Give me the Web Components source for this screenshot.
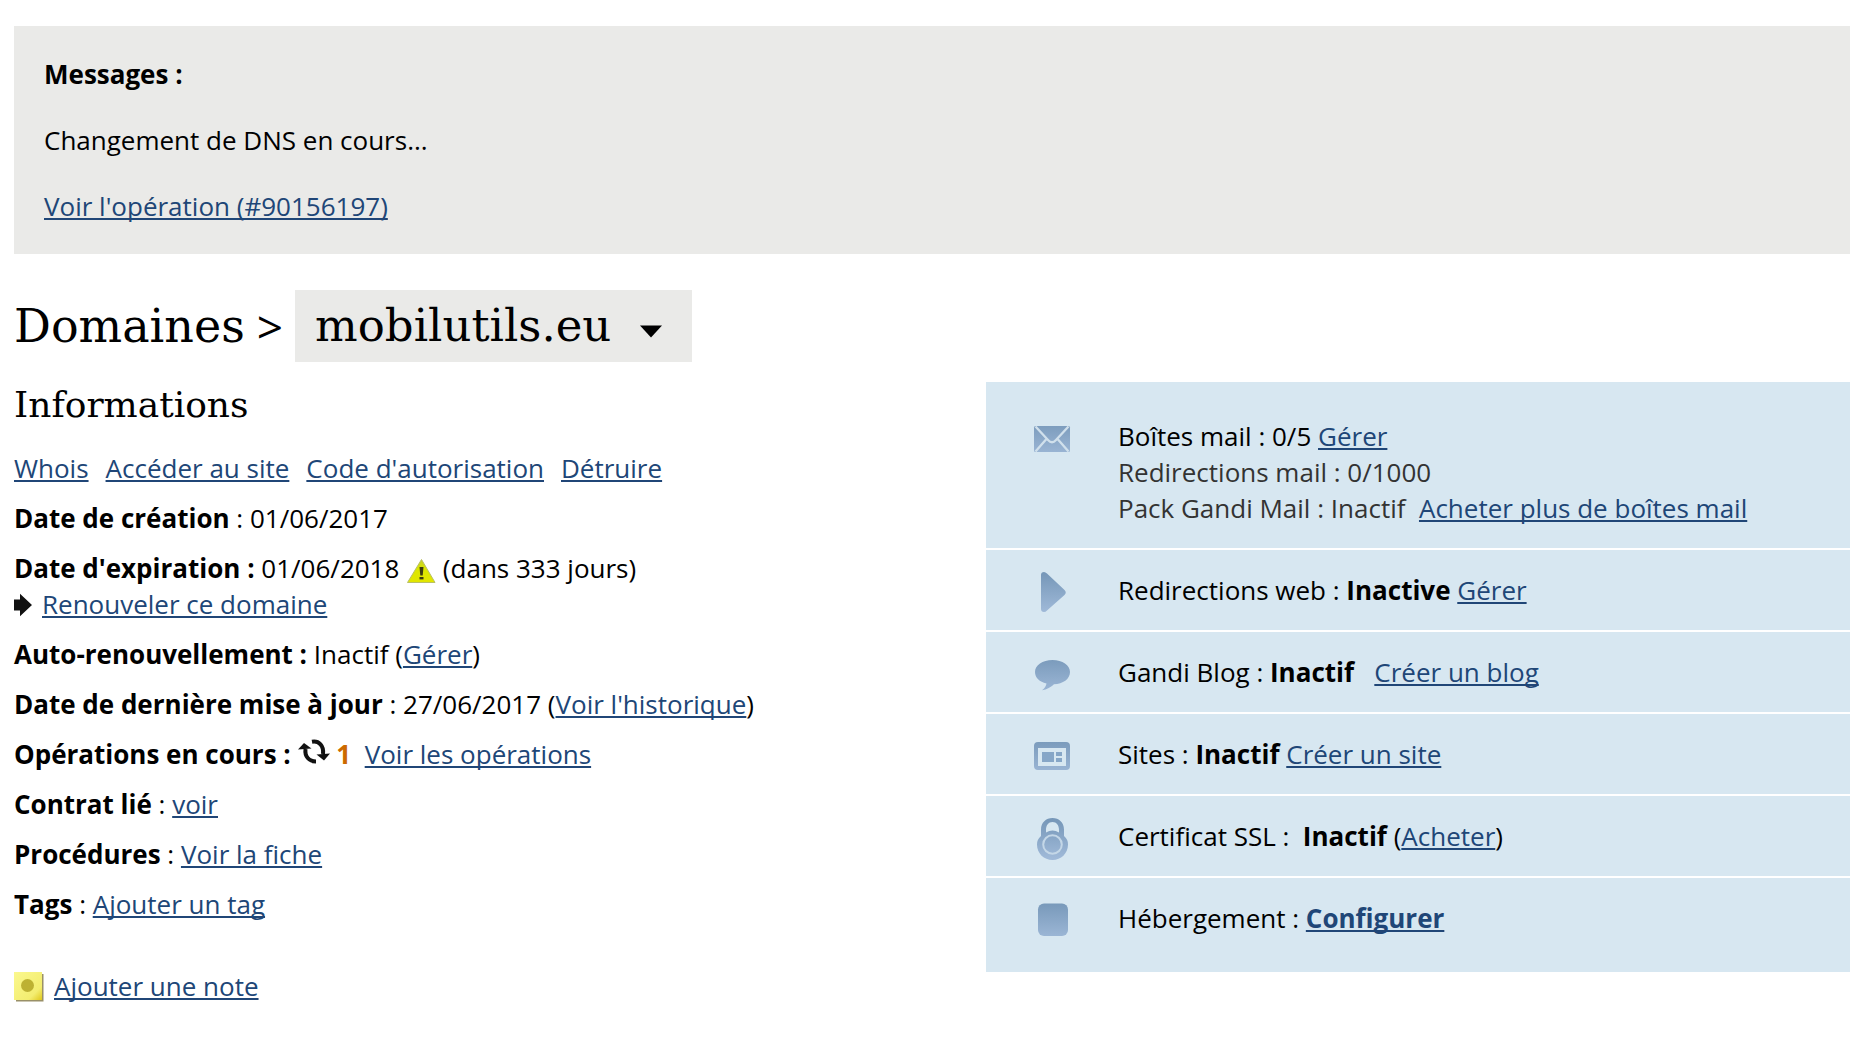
<!DOCTYPE html>
<html lang="fr">
<head>
<meta charset="utf-8">
<meta name="viewport" content="width=device-width, initial-scale=1">
<title>Domaines &gt; mobilutils.eu</title>
<style>
  body {
    margin: 0;
    background: #fff;
    color: #000;
    font: 26px/36px "Open Sans", "Noto Sans", sans-serif;
    --heading-font: "DejaVu Serif", serif;
    --link: #204677;
    --grey: #eaeae8;
    --panel: #d7e7f1;
    --alert: #cc6a00;
  }
</style>
</head>
<body>
<domain-page>
  <message-box slot="message" heading="Messages :">
    <span>Changement de DNS en cours...</span>
    <text-link>Voir l'opération (#90156197)</text-link>
  </message-box>

  <domain-title slot="title" section="Domaines" domain="mobilutils.eu"></domain-title>

  <domain-info slot="info" heading="Informations">
    <text-link slot="actions">Whois</text-link>
    <text-link slot="actions">Accéder au site</text-link>
    <text-link slot="actions">Code d'autorisation</text-link>
    <text-link slot="actions">Détruire</text-link>

    <div><b>Date de création</b> : 01/06/2017</div>
    <div><b>Date d'expiration :</b> 01/06/2018 <inline-icon name="warning"></inline-icon> (dans 333 jours)<br><inline-icon name="arrow"></inline-icon><text-link>Renouveler ce domaine</text-link></div>
    <div><b>Auto-renouvellement :</b> Inactif (<text-link>Gérer</text-link>)</div>
    <div><b>Date de dernière mise à jour</b> : 27/06/2017 (<text-link>Voir l'historique</text-link>)</div>
    <div><b>Opérations en cours :</b> <inline-icon name="refresh"></inline-icon> <b style="color:var(--alert)">1</b>&nbsp; <text-link>Voir les opérations</text-link></div>
    <div><b>Contrat lié</b> : <text-link>voir</text-link></div>
    <div><b>Procédures</b> : <text-link>Voir la fiche</text-link></div>
    <div><b>Tags</b> : <text-link>Ajouter un tag</text-link></div>

    <div slot="note"><inline-icon name="note"></inline-icon><text-link>Ajouter une note</text-link></div>
  </domain-info>

  <service-panel slot="services">
    <service-row icon="mail">Boîtes mail : 0/5 <text-link>Gérer</text-link>
      <span slot="more">Redirections mail : 0/1000</span>
      <span slot="more">Pack Gandi Mail : Inactif&nbsp; <text-link>Acheter plus de boîtes mail</text-link></span>
    </service-row>
    <service-row icon="redirect">Redirections web : <b>Inactive</b> <text-link>Gérer</text-link></service-row>
    <service-row icon="blog">Gandi Blog : <b>Inactif</b> &nbsp; <text-link>Créer un blog</text-link></service-row>
    <service-row icon="site">Sites : <b>Inactif</b> <text-link>Créer un site</text-link></service-row>
    <service-row icon="lock">Certificat SSL : &nbsp;<b>Inactif</b> (<text-link>Acheter</text-link>)</service-row>
    <service-row icon="hosting">Hébergement : <b><text-link>Configurer</text-link></b></service-row>
  </service-panel>
</domain-page>

<script>
  const define = (name, render) => customElements.define(name, class extends HTMLElement {
    constructor() {
      super();
      this.attachShadow({ mode: 'open' });
    }
    connectedCallback() {
      this.shadowRoot.innerHTML = render(this).trim();
    }
  });

  define('domain-page', () => `
    <style>
      :host { display: block; padding: 26px 26px 36px 14px; }
      main { display: flex; flex-direction: column; }
      .title { margin: 36px 0 20px; }
      .columns { display: grid; grid-template-columns: 9fr 8fr; align-items: start; }
    </style>
    <main>
      <slot name="message"></slot>
      <div class="title"><slot name="title"></slot></div>
      <div class="columns"><slot name="info"></slot><slot name="services"></slot></div>
    </main>`);

  define('text-link', () => `
    <style>
      :host { display: inline; }
      a {
        color: var(--link);
        text-decoration: underline 2px;
        text-underline-offset: 2px;
        text-decoration-skip-ink: none;
      }
    </style><a href="#"><slot></slot></a>`);

  define('message-box', el => `
    <style>
      :host { display: flex; flex-direction: column; gap: 30px; padding: 30px; background: var(--grey); }
      strong { font-weight: 700; }
    </style>
    <strong>${el.getAttribute('heading')}</strong>
    <slot></slot>`);

  define('domain-title', el => `
    <style>
      :host { display: block; }
      h1 { display: flex; gap: 12px; margin: 0; font: 400 46px/72px var(--heading-font); }
      .sep { font-family: "Open Sans", sans-serif; }
      .picker { display: grid; align-items: center; background: var(--grey); }
      select, svg { grid-area: 1 / 1; }
      select {
        appearance: none; height: 72px; margin: 0; padding: 0 80px 0 20px;
        border: 0; border-radius: 0; background: none; color: inherit;
        font: 400 45px/72px var(--heading-font);
      }
      svg { justify-self: end; margin: 10px 30px 0 0; pointer-events: none; }
    </style>
    <h1>
      <span>${el.getAttribute('section')}</span><span class="sep">&gt;</span>
      <span class="picker">
        <select aria-label="Domaine"><option>${el.getAttribute('domain')}</option></select>
        <svg width="22" height="13" viewBox="0 0 22 13"><path d="M0 .5h22L11 12.5z"/></svg>
      </span>
    </h1>`);

  define('domain-info', el => `
    <style>
      :host { display: block; }
      h2 { margin: 0 0 22px; font: 400 36px/46px var(--heading-font); }
      nav { display: flex; gap: 17px; margin-bottom: 14px; }
      .facts { display: flex; flex-direction: column; gap: 14px; }
      .note { margin-top: 46px; }
    </style>
    <h2>${el.getAttribute('heading')}</h2>
    <nav><slot name="actions"></slot></nav>
    <div class="facts"><slot></slot></div>
    <div class="note"><slot name="note"></slot></div>`);

  const inlineIcons = {
    warning: [30, 26, 0, -6, `
      <defs><linearGradient id="w" x2="0" y2="1"><stop stop-color="#c3cf30"/><stop offset=".4" stop-color="#dce600"/><stop offset="1" stop-color="#e2e600"/></linearGradient></defs>
      <path d="M15.500 1.500 29 24.500H1.500z" fill="url(#w)" stroke="#b9c065" stroke-linejoin="round"/>
      <path d="M13.500 9h4l-.8 8.500h-2.400z" fill="#3b3a12"/><rect x="13.500" y="19" width="4" height="2.400" fill="#3b3a12"/>`],
    arrow: [18, 24, 10, -3, `<path d="M0 6.500h6V.8L18 12 6 23.200V17.500H0z" fill="#111"/>`],
    refresh: [32, 28, 0, -2, `
      <g fill="none" stroke="#111" stroke-width="4"><path d="M7.500 11C6.500 18.500 11 23.500 18 23.500"/><path d="M14 3.800C21 2.500 26 8 25 16"/></g>
      <path d="M0 11.500 6 5 13.500 10.500z" fill="#111"/><path d="M18.500 16.500 32 15.500 26 22.500z" fill="#111"/>`],
    note: [30, 30, 10, -6, `
      <defs><linearGradient id="n" x2="1" y2="1"><stop stop-color="#fbf88e"/><stop offset=".75" stop-color="#f3ed70"/><stop offset="1" stop-color="#dfc81c"/></linearGradient>
      <filter id="s"><feGaussianBlur stdDeviation=".7"/></filter></defs>
      <rect x="2" y="2" width="27.500" height="27.500" fill="#999067" filter="url(#s)"/>
      <rect width="28" height="28" fill="url(#n)"/>
      <circle cx="13.500" cy="13.500" r="6.500" fill="#bdb133" filter="url(#s)"/>`]
  };

  define('inline-icon', el => {
    const [w, h, gap, drop, shape] = inlineIcons[el.getAttribute('name')];
    return `
      <style>
        :host { display: inline-block; width: ${w}px; height: 20px; margin-right: ${gap}px; }
        svg { display: block; width: ${w}px; height: ${h}px; margin-top: ${20 - h - drop}px; overflow: visible; }
      </style>
      <svg viewBox="0 0 ${w} ${h}" aria-hidden="true">${shape}</svg>`;
  });

  const serviceIcons = {
    mail: `<rect x="6" y="18" width="36" height="26" rx="1.500" fill="url(#g)"/>
      <path d="M7.500 18.500 20 32q4 4.500 8 0L40.500 18.500M7.500 43.500 18 31.500M40.500 43.500 30 31.500" fill="none" stroke="#d0e0ec" stroke-width="2.300"/>`,
    redirect: `<path d="M13 13q0-3 3-3 1.500 0 3 1.500L36.500 28q2.500 2.500 0 5L19 48.500q-1.500 1.500-3 1.500-3 0-3-3z" fill="url(#g)"/>`,
    blog: `<path d="M24.500 16C34.500 16 42 21 42 28s-7 12-16 12.300Q21.500 45 14 46.300q4-3 4.500-6.800C11.500 37.800 7 33.800 7 28c0-7 7.500-12 17.500-12z" fill="url(#g)"/>`,
    site: `<path fill-rule="evenodd" d="M10 16h28q4 0 4 4v20q0 4-4 4H10q-4 0-4-4V20q0-4 4-4zM10 22v18h28V22z" fill="url(#g)"/>
      <path d="M14 26h12v10H14zM28 26h6v4h-6zM28 32h6v4h-6z" fill="#86a6c7"/>`,
    lock: `<path fill-rule="evenodd" d="M13 28V21.500C13 14.500 18 10 24.500 10S36 14.500 36 21.500V28C39 30.500 40 33 40 36.500 40 45.500 33 52 24.500 52S9 45.500 9 36.500C9 33 10 30.500 13 28zM18 24.500q6.500-4 13 0V22c0-5-2.500-8-6.500-8S18 17 18 22z" fill="url(#g)"/>
      <circle cx="24.500" cy="36.500" r="9.300" fill="none" stroke="#c4d7e7" stroke-width="2"/>`,
    hosting: `<rect x="10" y="13.500" width="30" height="32.500" rx="6" fill="url(#g)"/>`
  };

  define('service-panel', () => `
    <style>
      :host { display: block; }
      div { display: flex; flex-direction: column; gap: 2px; border: solid var(--panel); border-width: 14px 0; }
    </style>
    <div><slot></slot></div>`);

  define('service-row', el => `
    <style>
      :host { display: flex; align-items: flex-start; gap: 42px; padding: 22px 42px; background: var(--panel); }
      svg { flex: none; margin: -10px 0; }
      .more { display: flex; flex-direction: column; color: #333; }
    </style>
    <svg width="48" height="56" viewBox="0 0 48 56" aria-hidden="true">
      <defs><linearGradient id="g" gradientUnits="userSpaceOnUse" x1="0" y1="12" x2="0" y2="50"><stop stop-color="#7798b9"/><stop offset="1" stop-color="#9fb9d8"/></linearGradient></defs>
      ${serviceIcons[el.getAttribute('icon')]}
    </svg>
    <div>
      <div><slot></slot></div>
      <div class="more"><slot name="more"></slot></div>
    </div>`);
</script>
</body>
</html>
